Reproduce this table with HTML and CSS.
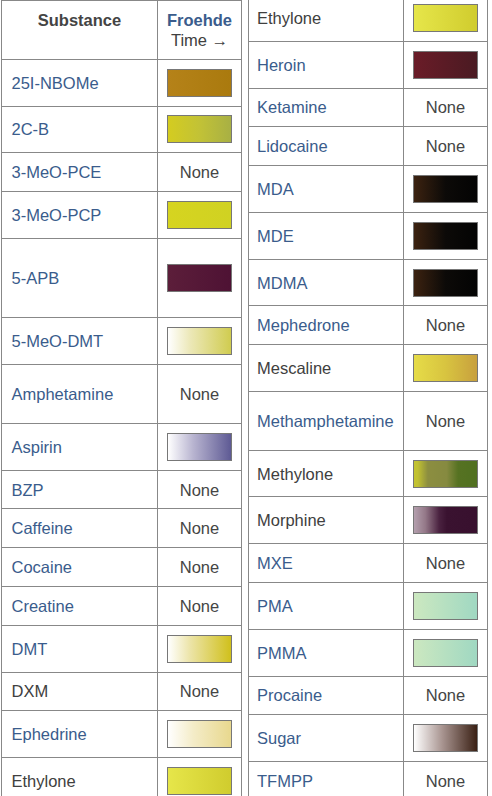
FILE: index.html
```html
<!DOCTYPE html>
<html>
<head>
<meta charset="utf-8">
<link rel="stylesheet" href="styles.css">
</head>
<body>
<div class="wrap">
<table class="reag">
<colgroup><col class="c1"><col class="c2"></colgroup>
<tr class="head"><th class="sub">Substance</th><th class="rg"><a>Froehde</a><br>Time →</th></tr>
<tr><td><a>25I-NBOMe</a></td><td><div class="sw s-25i"></div></td></tr>
<tr><td><a>2C-B</a></td><td><div class="sw s-2cb"></div></td></tr>
<tr><td><a>3-MeO-PCE</a></td><td class="none">None</td></tr>
<tr><td><a>3-MeO-PCP</a></td><td><div class="sw s-pcp"></div></td></tr>
<tr class="r80"><td><a>5-APB</a></td><td><div class="sw s-apb"></div></td></tr>
<tr><td><a>5-MeO-DMT</a></td><td><div class="sw s-5meo"></div></td></tr>
<tr class="r59"><td><a>Amphetamine</a></td><td class="none">None</td></tr>
<tr><td><a>Aspirin</a></td><td><div class="sw s-asp"></div></td></tr>
<tr><td><a>BZP</a></td><td class="none">None</td></tr>
<tr><td><a>Caffeine</a></td><td class="none">None</td></tr>
<tr><td><a>Cocaine</a></td><td class="none">None</td></tr>
<tr><td><a>Creatine</a></td><td class="none">None</td></tr>
<tr><td><a>DMT</a></td><td><div class="sw s-dmt"></div></td></tr>
<tr><td>DXM</td><td class="none">None</td></tr>
<tr><td><a>Ephedrine</a></td><td><div class="sw s-eph"></div></td></tr>
<tr><td>Ethylone</td><td><div class="sw s-eth"></div></td></tr>
</table>
<table class="reag right">
<colgroup><col class="c1r"><col class="c2"></colgroup>
<tr><td>Ethylone</td><td><div class="sw s-eth"></div></td></tr>
<tr><td><a>Heroin</a></td><td><div class="sw s-her"></div></td></tr>
<tr><td><a>Ketamine</a></td><td class="none">None</td></tr>
<tr><td><a>Lidocaine</a></td><td class="none">None</td></tr>
<tr><td><a>MDA</a></td><td><div class="sw s-mda"></div></td></tr>
<tr><td><a>MDE</a></td><td><div class="sw s-mda"></div></td></tr>
<tr><td><a>MDMA</a></td><td><div class="sw s-mda"></div></td></tr>
<tr><td><a>Mephedrone</a></td><td class="none">None</td></tr>
<tr><td>Mescaline</td><td><div class="sw s-mes"></div></td></tr>
<tr class="r58"><td><a>Methamphetamine</a></td><td class="none">None</td></tr>
<tr><td>Methylone</td><td><div class="sw s-mtl"></div></td></tr>
<tr><td>Morphine</td><td><div class="sw s-mor"></div></td></tr>
<tr><td><a>MXE</a></td><td class="none">None</td></tr>
<tr><td><a>PMA</a></td><td><div class="sw s-pma"></div></td></tr>
<tr><td><a>PMMA</a></td><td><div class="sw s-pma"></div></td></tr>
<tr><td><a>Procaine</a></td><td class="none">None</td></tr>
<tr><td><a>Sugar</a></td><td><div class="sw s-sug"></div></td></tr>
<tr><td><a>TFMPP</a></td><td class="none">None</td></tr>
</table>
</div>
</body>
</html>
```
FILE: styles.css
```css
html, body {
  margin: 0;
  padding: 0;
  background: #fff;
}
body {
  font-family: "Liberation Sans", Arial, sans-serif;
  font-size: 16.5px;
  line-height: 20px;
  color: #404040;
  overflow: hidden;
  height: 796px;
}
.wrap {
  display: flex;
  align-items: flex-start;
  gap: 6px;
  padding-left: 1px;
}
.reag {
  border-collapse: collapse;
  table-layout: fixed;
  width: 240px;
}
.reag.right {
  width: 239px;
  margin-top: -6px;
}
.c1 { width: 156px; }
.c1r { width: 155px; }
.c2 { width: 84px; }
.reag td, .reag th {
  border: 1px solid #888;
  padding: 8.9px 9.5px;
  vertical-align: middle;
}
.reag.right td:first-child {
  padding-left: 8px;
}
.reag th {
  vertical-align: top;
  font-weight: normal;
  text-align: center;
}
.reag th.sub {
  font-weight: bold;
  color: #444;
}
.reag th.rg {
  padding-left: 6px;
  padding-right: 6px;
}
.reag th.rg a {
  font-weight: bold;
}
.reag td:nth-child(2) {
  text-align: center;
  padding: 8.9px 8px 8.9px 8px;
}
a {
  color: #3a5c8c;
  text-decoration: none;
}
.none {
  color: #454545;
}
.r80 { height: 79.2px; }
.r59 { height: 59px; }
.r58 { height: 58.6px; }
.sw {
  width: 63px;
  height: 26px;
  border: 1px solid #777;
  margin: 0 auto;
}
.s-25i { background: linear-gradient(to right, #b58219, #aa7a0e); }
.s-2cb { background: linear-gradient(to right, #d4cc20, #c2c236 50%, #a8b044); }
.s-pcp { background: linear-gradient(to right, #d6d420, #d0d222); }
.s-apb { background: linear-gradient(to right, #5c1e3a, #4e1234); }
.s-5meo { background: linear-gradient(to right, #ffffff, #ece8b8 35%, #d0cc50); }
.s-asp { background: linear-gradient(to right, #ffffff, #b8b4d0 40%, #5e5a94); }
.s-dmt { background: linear-gradient(to right, #ffffff, #ece4a8 35%, #d0c01c); }
.s-eph { background: linear-gradient(to right, #ffffff, #f4ecc8 40%, #e8d88e); }
.s-eth { background: linear-gradient(to right, #e6e64a, #d0cc2e); }
.s-her { background: linear-gradient(to right, #6a1c28, #4a1a22); }
.s-mda { background: linear-gradient(to right, #3c2210, #0c0a08 50%, #030303); }
.s-mes { background: linear-gradient(to right, #e6dc48, #d8c440 50%, #c8a03e); }
.s-mtl { background: linear-gradient(to right, #c4c430 0%, #c0c032 6%, #8c8e40 22%, #868a40 52%, #567222 70%, #507020 100%); }
.s-mor { background: linear-gradient(to right, #b4a0ae 0%, #947888 18%, #4a2240 40%, #3a1230 52%, #38102e 100%); }
.s-pma { background: linear-gradient(to right, #cce8c0, #a0d8c2); }
.s-sug { background: linear-gradient(to right, #ffffff, #a89490 45%, #3a2014); }
```
